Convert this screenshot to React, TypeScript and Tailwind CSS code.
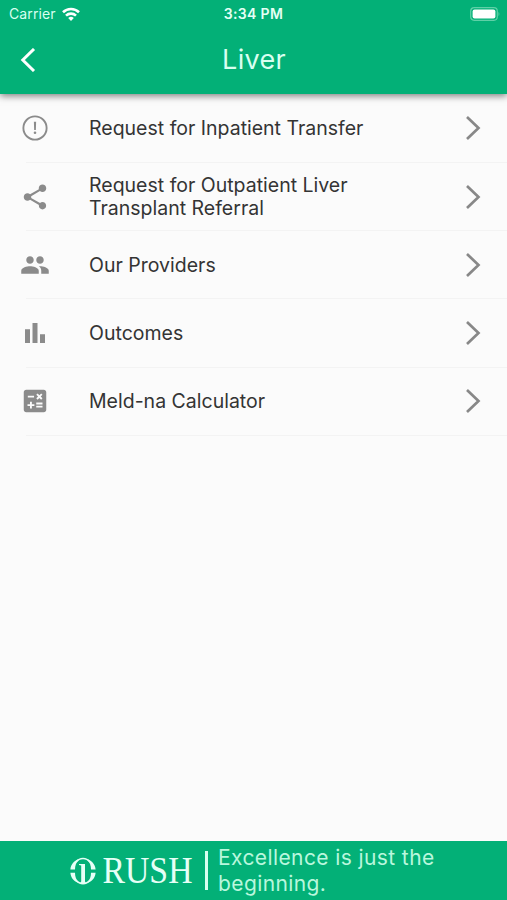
import type { ReactNode } from "react";

const items: { label: string; icon: ReactNode }[] = [
  {
    label: "Request for Inpatient Transfer",
    icon: (
      <>
        <circle cx="12" cy="12" r="9.3" fill="none" stroke="currentColor" strokeWidth="1.5" />
        <path d="M11.1 7h1.8l-.2 6.6h-1.4z" />
        <circle cx="12" cy="15.8" r="1.05" />
      </>
    ),
  },
  {
    label: "Request for Outpatient Liver Transplant Referral",
    icon: (
      <path d="M18 16.08c-.76 0-1.44.3-1.96.77L8.91 12.7c.05-.23.09-.46.09-.7s-.04-.47-.09-.7l7.05-4.11c.54.5 1.25.81 2.04.81 1.66 0 3-1.34 3-3s-1.34-3-3-3-3 1.34-3 3c0 .24.04.47.09.7L8.04 9.81C7.5 9.31 6.79 9 6 9c-1.66 0-3 1.34-3 3s1.34 3 3 3c.79 0 1.5-.31 2.04-.81l7.12 4.16c-.05.21-.08.43-.08.65 0 1.61 1.31 2.92 2.92 2.92s2.92-1.31 2.92-2.92-1.31-2.92-2.92-2.92z" />
    ),
  },
  {
    label: "Our Providers",
    icon: (
      <path d="M16 11c1.66 0 2.99-1.34 2.99-3S17.66 5 16 5s-3 1.34-3 3 1.34 3 3 3zm-8 0c1.66 0 2.99-1.34 2.99-3S9.66 5 8 5 5 6.34 5 8s1.34 3 3 3zm0 2c-2.33 0-7 1.17-7 3.5V19h14v-2.5c0-2.33-4.67-3.5-7-3.5zm8 0c-.29 0-.62.02-.97.05 1.16.84 1.97 1.97 1.97 3.45V19h6v-2.5c0-2.33-4.67-3.5-7-3.5z" />
    ),
  },
  {
    label: "Outcomes",
    icon: <path d="M4 9h4v11H4zM16 13h4v7h-4zM10 4h4v16h-4z" />,
  },
  {
    label: "Meld-na Calculator",
    icon: (
      <path d="M19 3H5c-1.1 0-2 .9-2 2v14c0 1.1.9 2 2 2h14c1.1 0 2-.9 2-2V5c0-1.1-.9-2-2-2zm-5.97 4.06L14.09 6l1.41 1.41L16.91 6l1.06 1.06-1.41 1.41 1.41 1.41-1.06 1.06-1.41-1.4-1.41 1.41-1.06-1.06 1.41-1.41-1.41-1.42zm-6.78.66h5v1.5h-5v-1.5zM11.5 16h-2v2H8v-2H6v-1.5h2v-2h1.5v2h2V16zm6.5 1.25h-5v-1.5h5v1.5zm0-2.5h-5v-1.5h5v1.5z" />
    ),
  },
];

function StatusBar() {
  return (
    <div className="grid h-7 grid-cols-3 items-center pb-px pl-[9px] pr-[7px] text-white">
      <div className="flex items-center gap-[6px]">
        <span className="text-[14px] tracking-[0.1px] text-[#d8fff0]">Carrier</span>
        <svg className="h-[14px] w-[18px]" viewBox="0 0 18 14" fill="none" stroke="currentColor" strokeWidth="2.6">
          <path d="M1 5.2a11.5 11.5 0 0 1 16 0" />
          <path d="M4 8.6a7.2 7.2 0 0 1 10 0" />
          <path d="M9 14 6.2 11.1a4.1 4.1 0 0 1 5.6 0z" fill="currentColor" stroke="none" />
        </svg>
      </div>
      <span className="pr-[2px] text-center text-[14px] font-semibold tracking-[0.35px] text-[#e4fff5]">3:34 PM</span>
      <svg className="h-[14px] w-[30px] justify-self-end" viewBox="0 0 30 14">
        <rect x=".7" y=".7" width="26.6" height="12.6" rx="3.5" fill="none" stroke="#5fd0a7" strokeWidth="1.2" />
        <rect x="2.6" y="2.5" width="22.8" height="9" rx="2" fill="#fff" />
        <path d="M28.5 5c1.2.5 1.2 3.5 0 4z" fill="#5fd0a7" />
      </svg>
    </div>
  );
}

function RushLogo() {
  return (
    <div className="flex items-center gap-[6px] text-[#e6fff6]">
      <svg className="h-[28px] w-[26px]" viewBox="0 0 26 28" fill="none" stroke="currentColor">
        <path d="M6 5.2C8 2.600 10.200 1.500 13 1.500s5 1.100 7 3.700" strokeWidth="1.400" />
        <path d="M6 23C8 25.500 10.200 26.700 13 26.700s5-1.200 7-3.700" strokeWidth="1.400" />
        <path d="M.4 12.600h4.600C5 8.800 6 5.600 9 2 4.500 3.300.8 7 .4 12.600zM25.600 12.600H21c0-3.800-1-7-4-10.600 4.500 1.300 8.200 5 8.600 10.600zM.4 15.800h4.600c0 3.800 1 6.900 4 10.400-4.500-1.200-8.200-4.800-8.600-10.400zM25.600 15.800H21c0 3.800-1 6.900-4 10.400 4.500-1.200 8.200-4.800 8.600-10.400z" fill="currentColor" stroke="none" />
        <path d="M9 7h6v17.500l1.500 2.200h-7l1.700-2.200V8.400L9 8z" fill="currentColor" stroke="none" />
      </svg>
      <svg className="h-[36px] w-[92px] overflow-visible" viewBox="0 0 92 36">
        <text x="0.5" y="30" fill="currentColor" fontSize="37.5" fontFamily="Liberation Serif, serif" textLength="90" lengthAdjust="spacingAndGlyphs">
          RUSH
        </text>
      </svg>
    </div>
  );
}

export default function App() {
  return (
    <div className="flex h-[900px] w-full flex-col bg-[#fbfbfb] font-['Inter',sans-serif]">
      <header className="relative h-[94px] shrink-0 bg-[#03b077] shadow-[0_2px_7px_rgba(0,0,0,0.5)]">
        <StatusBar />
        <div className="grid h-[63px] grid-cols-[60px_1fr_60px] items-center">
          <button aria-label="Back" className="pl-5">
            <svg className="h-6 w-4 text-white" viewBox="0 0 16 24" fill="none" stroke="currentColor" strokeWidth="3">
              <path d="M14 1 2.8 12 14 23" />
            </svg>
          </button>
          <h1 className="pl-[1px] text-center text-[27px] leading-none tracking-[0.3px] text-[#d8fff0]">Liver</h1>
        </div>
      </header>

      <ul className="flex-1 pt-[0.6px]">
        {items.map((item) => (
          <li key={item.label} className="flex h-[68.3px] flex-col">
            <div className="flex flex-1 items-center pl-5">
              <svg className="h-[30px] w-[30px] shrink-0 text-[#8b8b8b]" viewBox="0 0 24 24" fill="currentColor">
                {item.icon}
              </svg>
              <div className="ml-[39px] w-[300px] pt-[1.4px] text-[19.5px] leading-[23.5px] text-[#343434]">
                {item.label}
              </div>
              <svg className="ml-[76px] h-6 w-4 text-[#888]" viewBox="0 0 16 24" fill="none" stroke="currentColor" strokeWidth="2.7">
                <path d="M2 1l11.5 11L2 23" />
              </svg>
            </div>
            <div className="ml-[26px] h-px shrink-0 bg-[#f3f3f3]" />
          </li>
        ))}
      </ul>

      <footer className="flex h-[59px] shrink-0 items-center bg-[#03b077] pl-[70px]">
        <RushLogo />
        <div className="ml-[11px] h-[39px] w-[3px] bg-[#d8fff0]" />
        <p className="ml-[10px] w-[240px] text-[21px] leading-[26px] tracking-[0.4px] text-[#b9f7dd]">
          Excellence is just the beginning.
        </p>
      </footer>
    </div>
  );
}
